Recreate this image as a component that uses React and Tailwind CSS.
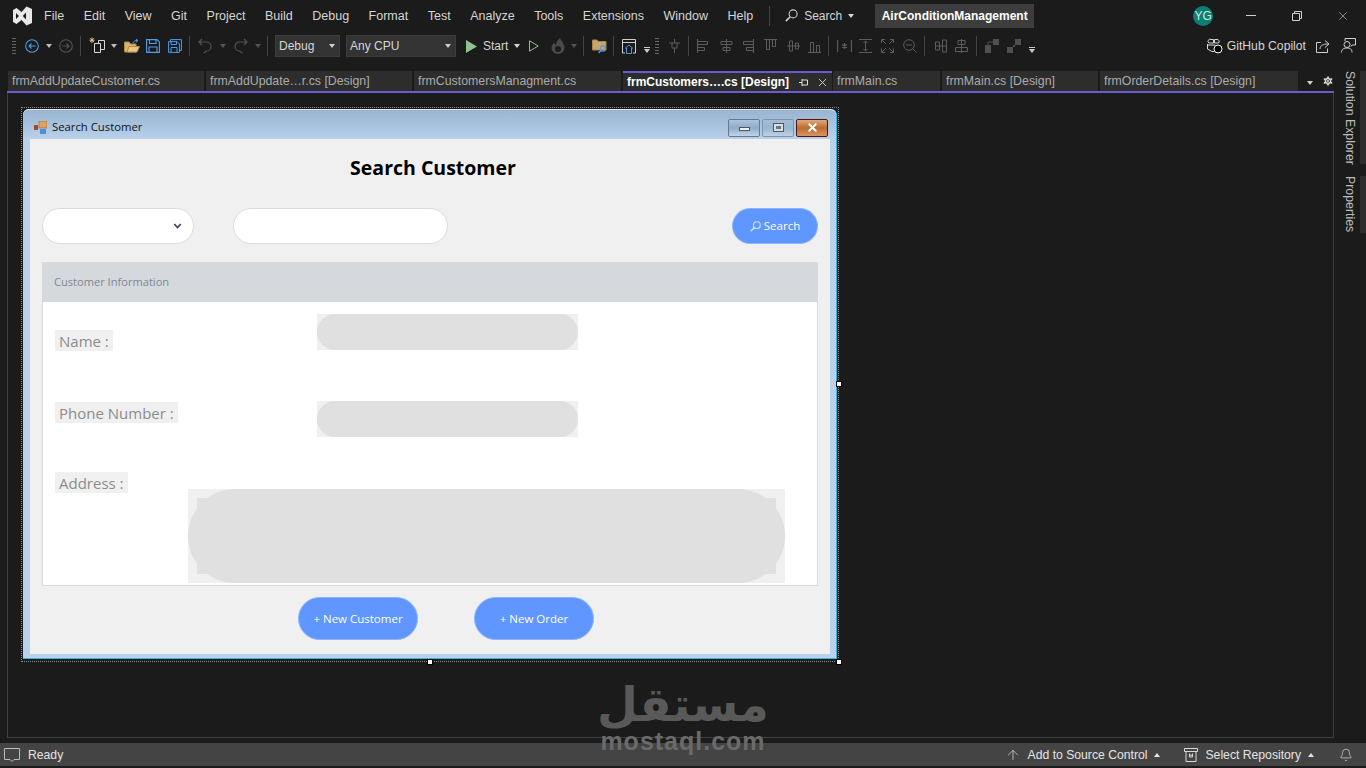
import { ArrowUp, Bell, Settings, X } from 'lucide-react';

const menuItems = ['File', 'Edit', 'View', 'Git', 'Project', 'Build', 'Debug', 'Format', 'Test', 'Analyze', 'Tools', 'Extensions', 'Window', 'Help'];

const tabs = [
  { name: 'frmAddUpdateCustomer.cs', width: 'w-[198px]' },
  { name: 'frmAddUpdate…r.cs [Design]', width: 'w-[208px]' },
  { name: 'frmCustomersManagment.cs', width: 'w-[209px]' },
  { name: 'frmCustomers….cs [Design]', width: 'w-[209px]', active: true },
  { name: 'frmMain.cs', width: 'w-[109px]' },
  { name: 'frmMain.cs [Design]', width: 'w-[158px]' },
  { name: 'frmOrderDetails.cs [Design]', width: 'w-[200px]' },
];

const Caret = ({ className = '', up = false }) => (
  <svg viewBox="0 0 6 4" className={`w-[6px] h-[4px] shrink-0 ${className}`} fill="currentColor">
    <path d={up ? 'M0 4 L3 0 L6 4 Z' : 'M0 0 L6 0 L3 4 Z'} />
  </svg>
);

// magnifier with the handle towards the bottom left
const Magnifier = ({ className = '', strokeWidth = 1.2 }) => (
  <svg viewBox="0 0 12 12" className={`shrink-0 ${className}`} fill="none" stroke="currentColor" strokeWidth={strokeWidth}>
    <circle cx="7.5" cy="4.5" r="3.7" />
    <path d="M4.8 7.2 L0.8 11.2" strokeWidth={strokeWidth + 0.5} />
  </svg>
);

const Gripper = ({ className = '' }) => (
  <div className={`w-[4px] h-[18px] shrink-0 bg-[radial-gradient(circle,#666_0.6px,transparent_0.7px)] bg-[length:2px_3px] ${className}`} />
);

const Sep = ({ className = '' }) => <div className={`w-px h-[20px] shrink-0 bg-[#444] ${className}`} />;

// dim layout toolbar glyphs, all share one stroke colour
const Tool = ({ className = '', w = 13, children }) => (
  <svg viewBox={`0 0 ${w} 14`} className={`h-[14px] shrink-0 text-[#5c5c5c] ${className}`} fill="none" stroke="currentColor" strokeWidth="1">
    {children}
  </svg>
);

const VsLogo = () => (
  <svg viewBox="0 0 20 20" className="w-[20px] h-[20px] shrink-0" fill="#e8e8e8">
    <path fillRule="evenodd" d="M14.5 0.5 L20 3 V17 L14.5 19.5 L9.5 14 L4.5 18 L1 16 V4 L4.5 2 L9.5 6 Z M4 7 V13 L7 10 Z M14 6.5 L10.8 10 L14 13.5 Z" />
  </svg>
);

const TitleBar = () => (
  <div className="h-[31px] shrink-0 flex items-center text-[12px] text-[#d6d6d6]">
    <div className="ml-[12px]"><VsLogo /></div>
    <div className="ml-[12px] mt-px flex items-center gap-[19.5px] text-[12.5px]">
      {menuItems.map((item) => (
        <span key={item}>{item}</span>
      ))}
    </div>
    <div className="ml-[16px] w-px h-[20px] bg-[#444]" />
    <Magnifier className="ml-[15px] w-[13px] h-[13px] text-[#cfcfcf]" strokeWidth={1} />
    <span className="ml-[6px]">Search</span>
    <Caret className="ml-[6px]" />
    <div className="ml-[21px] w-[159px] h-[24px] bg-[#3d3d3d] flex items-center justify-center font-bold text-white">
      AirConditionManagement
    </div>
    <div className="ml-[159px] w-[20px] h-[20px] rounded-full bg-[#0d7f72] flex items-center justify-center text-[12px] text-[#cfe9e5]">
      YG
    </div>
    <div className="ml-[33px] w-[10px] h-px bg-[#d0d0d0]" />
    <svg viewBox="0 0 10 10" className="ml-[36px] w-[10px] h-[10px]" fill="none" stroke="#d0d0d0">
      <path d="M0.5 2.5 H7.5 V9.5 H0.5 Z M2.5 2.5 V0.5 H9.5 V7.5 H7.5" />
    </svg>
    <X className="ml-[34px] w-[14px] h-[14px] text-[#d0d0d0]" strokeWidth={1} />
  </div>
);

const Toolbar = () => (
  <div className="h-[30px] shrink-0 flex items-center text-[12px] text-[#d6d6d6]">
    <Gripper className="ml-[12px]" />
    <svg viewBox="0 0 14 14" className="ml-[9px] w-[14px] h-[14px] shrink-0" fill="none" stroke="#4f9be8" strokeWidth="1.1">
      <circle cx="7" cy="7" r="6.3" />
      <path d="M10.5 7 H4 M6.5 4.5 L4 7 L6.5 9.5" />
    </svg>
    <Caret className="ml-[7px] text-[#bdbdbd]" />
    <svg viewBox="0 0 14 14" className="ml-[7px] w-[14px] h-[14px] shrink-0" fill="none" stroke="#555" strokeWidth="1.1">
      <circle cx="7" cy="7" r="6.3" />
      <path d="M3.5 7 H10 M7.5 4.5 L10 7 L7.5 9.5" />
    </svg>
    <Sep className="ml-[7px]" />
    <svg viewBox="0 0 16 18" className="ml-[8px] w-[16px] h-[18px] shrink-0" fill="none" stroke="#d8d8d8">
      <path d="M5.5 6.5 H11.5 V15.5 H5.5 Z M9.5 6.5 V3.5 H15.5 V12.5 H11.5" />
      <path d="M3 0.5 V6 M0.5 3.2 H5.5 M1.2 1.3 L4.8 5 M4.8 1.3 L1.2 5" stroke="#e3c57f" />
    </svg>
    <Caret className="ml-[6px] text-[#bdbdbd]" />
    <svg viewBox="0 0 16 14" className="ml-[7px] w-[16px] h-[14px] shrink-0">
      <path d="M0.5 3 H5 L6.5 5 H12 V13 H0.5 Z" fill="#d9b36c" stroke="#b08a45" />
      <path d="M3 13 L5 7.5 H15.5 L13 13 Z" fill="#e8c98a" stroke="#b08a45" />
      <path d="M9 4 C9.5 2 11.5 1.5 13.5 1.5 M12 0 L14 1.5 L12 3.2" fill="none" stroke="#4f9be8" />
    </svg>
    <svg viewBox="0 0 14 14" className="ml-[6px] w-[14px] h-[14px] shrink-0" fill="none" stroke="#4f9be8" strokeWidth="1.1">
      <path d="M0.6 0.6 H11 L13.4 3 V13.4 H0.6 Z M3.5 0.6 V4.5 H10 V0.6 M3 13.4 V8 H11 V13.4" />
    </svg>
    <svg viewBox="0 0 14 14" className="ml-[8px] w-[14px] h-[14px] shrink-0" fill="none" stroke="#4f9be8" strokeWidth="1">
      <path d="M2.5 2.5 V0.6 H13.4 V11.5 H11.5 M0.6 2.6 H9 L11.4 5 V13.4 H0.6 Z M3 13.4 V8.5 H9 V13.4 M3 2.6 V5.5 H8.5 V2.6" />
    </svg>
    <Sep className="ml-[7px]" />
    <svg viewBox="0 0 14 16" className="ml-[8px] w-[14px] h-[16px] shrink-0" fill="none" stroke="#555" strokeWidth="1.2">
      <path d="M4 1 L1 4 L4 7 M1 4 H8.5 A4.5 4.5 0 0 1 8.5 13 L5.5 15" />
    </svg>
    <Caret className="ml-[8px] text-[#555]" />
    <svg viewBox="0 0 14 16" className="ml-[8px] w-[14px] h-[16px] shrink-0" fill="none" stroke="#555" strokeWidth="1.2">
      <path d="M10 1 L13 4 L10 7 M13 4 H5.5 A4.5 4.5 0 0 0 5.5 13 L8.5 15" />
    </svg>
    <Caret className="ml-[7px] text-[#555]" />
    <Sep className="ml-[6px]" />
    <div className="ml-[7px] w-[65px] h-[22px] shrink-0 bg-[#333] border border-[#3c3c3c] flex items-center justify-between pl-[3px] pr-[4px]">
      <span>Debug</span>
      <Caret className="text-[#d0d0d0]" />
    </div>
    <div className="ml-[6px] w-[110px] h-[22px] shrink-0 bg-[#333] border border-[#3c3c3c] flex items-center justify-between pl-[3px] pr-[4px]">
      <span>Any CPU</span>
      <Caret className="text-[#d0d0d0]" />
    </div>
    <svg viewBox="0 0 11 13" className="ml-[10px] w-[11px] h-[13px] shrink-0" fill="#8cc48c">
      <path d="M0 0 L11 6.5 L0 13 Z" />
    </svg>
    <span className="ml-[6px] w-[30px] shrink-0">Start</span>
    <Caret className="ml-px" />
    <svg viewBox="0 0 10 12" className="ml-[9px] w-[10px] h-[12px] shrink-0" fill="none" stroke="#8cc48c">
      <path d="M0.5 0.8 L9.2 6 L0.5 11.2 Z" />
    </svg>
    <svg viewBox="0 0 14 16" className="ml-[12px] w-[14px] h-[16px] shrink-0" fill="#4a4a4a">
      <path fillRule="evenodd" d="M9 0 C10 3 13.5 5 13.5 10 A6.5 6 0 0 1 0.5 10 C0.5 7.5 2 6 3 4.5 C3.5 6 4 6.5 5 7 C5 4 6.5 2 9 0 Z M7 8 A3 3 0 1 0 7 14 A3 3 0 1 0 7 8 Z" />
    </svg>
    <Caret className="ml-[6px] text-[#555]" />
    <Sep className="ml-[6px]" />
    <svg viewBox="0 0 16 16" className="ml-[8px] w-[16px] h-[16px] shrink-0">
      <path d="M0.5 2 H5 L6 3.5 H14 V12 H0.5 Z" fill="#c9a667" stroke="#a5854c" />
      <circle cx="11" cy="10.5" r="2.6" fill="none" stroke="#4f9be8" strokeWidth="1.2" />
      <path d="M9 12.5 L6.5 15" stroke="#4f9be8" strokeWidth="1.4" />
    </svg>
    <Sep className="ml-[5px]" />
    <svg viewBox="0 0 14 15" className="ml-[8px] w-[14px] h-[15px] shrink-0" fill="none">
      <path d="M3 14 H0.5 V0.5 H13.5 V14 H11 M0.5 3.5 H13.5" stroke="#cfcfcf" />
      <path d="M3 9.5 L7 6 L11 9.5 M4.5 9 V14.5 H9.5 V9" stroke="#4f9be8" />
    </svg>
    <div className="ml-[8px] w-[6px] flex flex-col gap-px mt-[8px] shrink-0">
      <div className="h-px bg-[#ccc]" />
      <Caret className="text-[#ccc]" />
    </div>
    <Gripper className="ml-[5px]" />
    <Tool className="ml-[9px] w-[13px]"><path d="M6.5 0 V4 M6.5 9 V14 M1 4 H12 M4 4 V9 H9 V4" /></Tool>
    <Sep className="ml-[7px]" />
    <Tool className="ml-[8px] w-[13px]"><path d="M0.5 0 V14 M0.5 2.5 H10.5 V5.5 H0.5 M0.5 8.5 H7.5 V11.5 H0.5" /></Tool>
    <Tool className="ml-[10px] w-[13px]"><path d="M6.5 0 V14 M1 2.5 H12 V5.5 H1 Z M3 8.5 H10 V11.5 H3 Z" /></Tool>
    <Tool className="ml-[8px] w-[13px]"><path d="M12.5 0 V14 M12.5 2.5 H2.5 V5.5 H12.5 M12.5 8.5 H5.5 V11.5 H12.5" /></Tool>
    <Tool className="ml-[10px] w-[13px]"><path d="M0 0.5 H13 M2.5 0.5 V10.5 H5.5 V0.5 M8.5 0.5 V7.5 H11.5 V0.5" /></Tool>
    <Tool className="ml-[10px] w-[13px]"><path d="M0 7 H13 M2.5 2 H5.5 V12 H2.5 Z M8.5 4 H11.5 V10 H8.5 Z" /></Tool>
    <Tool className="ml-[8px] w-[13px]"><path d="M0 13.5 H13 M2.5 13.5 V3.5 H5.5 V13.5 M8.5 13.5 V6.5 H11.5 V13.5" /></Tool>
    <Sep className="ml-[7px]" />
    <Tool className="ml-[8px] w-[15px]" w={15}><path d="M0.5 1 V13 M14.5 1 V13 M7.5 4 V10 M5 5.5 L10 8.5 M10 5.5 L5 8.5" strokeWidth="1.3" /></Tool>
    <Tool className="ml-[7px] w-[13px]"><path d="M0 0.5 H13 M0 13.5 H13 M6.5 2 V12 M4.5 4 L6.5 2 L8.5 4 M4.5 10 L6.5 12 L8.5 10" /></Tool>
    <Tool className="ml-[9px] w-[13px]"><path d="M0.5 4 V0.5 H4 M9 0.5 H12.5 V4 M12.5 9.5 V13.5 H9 M4 13.5 H0.5 V9.5 M1 1 L5 5 M12 1 L8 5 M1 13 L5 9 M12 13 L8 9" /></Tool>
    <Tool className="ml-[9px] w-[14px]" w={14}><circle cx="6" cy="6" r="5.3" /><path d="M10 10 L13.5 13.5 M3 6 H9" /></Tool>
    <Sep className="ml-[7px]" />
    <Tool className="ml-[10px] w-[12px]" w={12}><path d="M0 7 H12 M0.5 3 H4.5 V11 H0.5 Z M7.5 1 H11.5 V13 H7.5 Z" /></Tool>
    <Tool className="ml-[8px] w-[13px]"><path d="M6.5 0 V14 M3 1.5 H10 V5.5 H3 Z M0.5 8.5 H12.5 V12.5 H0.5 Z" /></Tool>
    <Sep className="ml-[8px]" />
    <svg viewBox="0 0 14 14" className="ml-[8px] w-[14px] h-[14px] shrink-0" fill="#505050">
      <path d="M0 6 H6 V14 H0 Z M8 0 H14 V6 H8 Z" />
      <path d="M6 3 H9 M3 6 V3 H6" stroke="#505050" fill="none" />
    </svg>
    <svg viewBox="0 0 14 14" className="ml-[8px] w-[14px] h-[14px] shrink-0" fill="#505050">
      <path d="M0 8 H6 V14 H0 Z M8 0 H14 V6 H8 Z M6 6 H8 V8 H6 Z" />
    </svg>
    <div className="ml-[8px] w-[6px] flex flex-col gap-px mt-[8px] shrink-0">
      <div className="h-px bg-[#ccc]" />
      <Caret className="text-[#ccc]" />
    </div>
    <div className="ml-auto pr-[10px] flex items-center">
      <svg viewBox="0 0 17 16" className="w-[17px] h-[16px]" fill="none" stroke="#d8d8d8">
        <path d="M5 1.5 H7.5 V5 H3 A2 2 0 0 1 5 1.5 Z M8.5 1.5 H11 A2 2 0 0 1 12.5 5 H8.5 Z M2 7 H9 M1.5 6 V11 L6 13.5 H8" />
        <circle cx="12" cy="11" r="4" fill="#000" stroke="#fff" />
      </svg>
      <span className="ml-[4px] text-[12.2px]">GitHub Copilot</span>
      <svg viewBox="0 0 14 14" className="ml-[10px] w-[14px] h-[14px]" fill="none" stroke="#cfcfcf">
        <path d="M5 3.5 H0.5 V13.5 H11.5 V9.5" />
        <path d="M4 10 C4 6.5 7 5 12 5 M9 1.5 L13 5 L9 8.5" />
      </svg>
      <svg viewBox="0 0 15 15" className="ml-[11px] w-[15px] h-[15px]" fill="none" stroke="#cfcfcf">
        <path d="M4 3 V0.5 H14.5 V7 H11 L10 8.5" />
        <circle cx="6" cy="6.5" r="3" />
        <path d="M0.5 14.5 C0.5 11 3 10 6 10 C9 10 11 11 11 14.5" />
      </svg>
    </div>
  </div>
);

const TabStrip = () => (
  <div className="h-[22px] shrink-0 flex items-start pl-px text-[12.33px]">
    {tabs.map((tab) => (
      <div
        key={tab.name}
        className={
          tab.active
            ? `${tab.width} h-[20px] shrink-0 mr-px bg-[#2c2c2c] border-t-2 border-[#6a5bd2] flex items-center pl-[4px] font-bold text-[12px] text-white`
            : `${tab.width} h-[20px] shrink-0 pr-[2px]`
        }
      >
        {tab.active ? (
          <>
            <span className="whitespace-nowrap">{tab.name}</span>
            <svg viewBox="0 0 9 9" className="ml-[10px] w-[9px] h-[9px] shrink-0" fill="none" stroke="#e0e0e0">
              <path d="M0 4.5 H3 M3 1 V8 M3 2 H8.5 V7 H3" />
            </svg>
            <X className="ml-[8px] w-[13px] h-[13px] shrink-0 text-[#e0e0e0]" strokeWidth={1.6} />
          </>
        ) : (
          <div className="h-full bg-[#2d2d2d] pl-[4px] flex items-center text-[#ababab] whitespace-nowrap overflow-hidden">
            {tab.name}
          </div>
        )}
      </div>
    ))}
    <Caret className="ml-[7px] mt-[10px] text-[#d0d0d0]" />
    <Settings className="ml-[9px] mt-[4px] w-[12px] h-[12px] text-[#2c2c2c] fill-[#d8d8d8]" strokeWidth={1.5} />
  </div>
);

const WinButton = ({ className = '', children }) => (
  <div className={`w-[32px] h-[18px] rounded-[2px] border flex items-center justify-center ${className}`}>{children}</div>
);

const FieldLabel = ({ children }) => (
  <div className="w-fit px-[4px] h-[21px] bg-[#f0f0f0] text-[15px] leading-[23px] text-[#8c8c8c] whitespace-nowrap">{children}</div>
);

const FieldBox = () => (
  <div className="w-[261px] h-[36px] bg-[#f0f0f0]">
    <div className="h-full rounded-full bg-[#e0e0e0]" />
  </div>
);

const PillButton = ({ children, className = '' }) => (
  <div className={`rounded-full bg-[#5f96ff] border border-[#8eb4ff] flex items-center justify-center text-[11.5px] text-white ${className}`}>
    {children}
  </div>
);

const SearchForm = () => (
  <div className="w-[814px] h-[550px] rounded-t-[6px] bg-[#b9d1ea] border-r border-b border-[#2fb8e6] flex flex-col font-['Open_Sans',sans-serif]">
    <div className="h-[30px] shrink-0 rounded-t-[6px] border-t border-[#dfe9f3] bg-gradient-to-b from-[#99b4d1] to-[#b9d1ea] flex items-center pt-[6px] pl-[11px] pr-[8px]">
      <svg viewBox="0 0 13 13" className="w-[13px] h-[13px] shrink-0">
        <rect x="5" y="0" width="8" height="7" fill="#e0a060" stroke="#a86a30" strokeWidth="0.7" />
        <rect x="0" y="4" width="4" height="5" fill="#a8481e" />
        <rect x="6" y="8" width="6" height="5" fill="#4a90e0" />
      </svg>
      <span className="ml-[5px] text-[11.3px] text-[#111]">Search Customer</span>
      <div className="ml-auto flex gap-[2px]">
        <WinButton className="border-[#6b7785] bg-gradient-to-b from-[#a9c4df] via-[#8eabc8] to-[#c2d6ea]">
          <div className="w-[11px] h-[4px] bg-[#eee] border border-[#555] mt-[3px]" />
        </WinButton>
        <WinButton className="border-[#7f95aa] bg-gradient-to-b from-[#a3bdd8] via-[#9ab5d1] to-[#bcd2e8]">
          <div className="w-[11px] h-[9px] bg-[#ddd] border border-[#555] flex items-center justify-center">
            <div className="w-[5px] h-[3px] bg-[#5b7a9a]" />
          </div>
        </WinButton>
        <WinButton className="border-[#4a1a1a] bg-gradient-to-b from-[#e3a878] via-[#b96c33] to-[#d99662]">
          <X className="w-[13px] h-[13px] text-white" strokeWidth={3.5} />
        </WinButton>
      </div>
    </div>
    <div className="ml-[7px] w-[800px] h-[515px] bg-[#f0f0f0] px-[12px] flex flex-col">
      <h1 className="mt-[15px] h-[28px] text-[19.5px] leading-[28px] font-bold text-black text-center pl-[6px]">Search Customer</h1>
      <div className="mt-[26px] h-[36px] flex items-stretch">
        <div className="w-[152px] rounded-full bg-white border border-[#dcdcdc] flex items-center justify-end pr-[11px]">
          <svg viewBox="0 0 8 6" className="w-[9px] h-[6px]" fill="none" stroke="#3d4a5f" strokeWidth="1.8">
            <path d="M0.8 1 L4 4.5 L7.2 1" />
          </svg>
        </div>
        <div className="ml-[39px] w-[215px] rounded-full bg-white border border-[#dcdcdc]" />
        <PillButton className="ml-auto w-[86px] gap-[3px]">
          <Magnifier className="w-[11px] h-[11px] text-[#cfe0ff]" />
          <span>Search</span>
        </PillButton>
      </div>
      <div className="mt-[18px] h-[324px] border border-[#d9d9d9] bg-white flex flex-col">
        <div className="h-[39px] shrink-0 bg-[#d5d9dd] flex items-center pl-[11px] text-[11.1px] text-[#7c8791]">
          Customer Information
        </div>
        <div className="flex-1 flex flex-col pl-[12px]">
          <div className="mt-[12px] h-[36px] flex items-start">
            <div className="w-[262px] mt-[16px]"><FieldLabel>Name :</FieldLabel></div>
            <FieldBox />
          </div>
          <div className="mt-[51px] h-[36px] flex items-start">
            <div className="w-[262px] mt-px"><FieldLabel>Phone Number :</FieldLabel></div>
            <FieldBox />
          </div>
          <div className="mt-[35px] w-[73px]"><FieldLabel>Address :</FieldLabel></div>
          <div className="ml-[133px] -mt-[4px] w-[597px] h-[94px] bg-[#f0f0f0]">
            <div className="h-full rounded-[47px] bg-[#e0e0e0] p-[9px]">
              <div className="h-full bg-[#e0e0e0]" />
            </div>
          </div>
        </div>
      </div>
      <div className="mt-[11px] ml-[256px] flex gap-[56px]">
        <PillButton className="w-[120px] h-[43px]">+ New Customer</PillButton>
        <PillButton className="w-[120px] h-[43px]">+ New Order</PillButton>
      </div>
    </div>
  </div>
);

const Handle = ({ className = '' }) => (
  <div className={`absolute w-[6px] h-[6px] bg-white border border-black ${className}`} />
);

const App = () => (
  <div className="relative w-[1366px] h-[768px] overflow-hidden bg-[#1b1b1b] flex flex-col font-['Liberation_Sans',sans-serif]">
    <TitleBar />
    <Toolbar />
    <div className="mt-[10px] h-[672px] flex">
      <div className="ml-[7px] w-[1327px] flex flex-col pb-[5px]">
        <TabStrip />
        <div className="relative -mt-[2px] h-[2px] bg-[#6a5bd2] shrink-0" />
        <div className="flex-1 border-l border-r border-b border-[#3f3f3f] pl-[13px] pt-[14px]">
          <div className="relative w-[818px] h-[555px] border border-dotted border-[#8a8a8a] p-px">
            <SearchForm />
            <Handle className="right-[-4px] top-[273px]" />
            <Handle className="left-[405px] bottom-[-4px]" />
            <Handle className="right-[-4px] bottom-[-4px]" />
          </div>
        </div>
      </div>
      <div className="relative flex-1 flex flex-col items-start pl-[7px] text-[12.33px] text-[#bdbdbd]">
        <div className="h-[93px] [writing-mode:vertical-rl] whitespace-nowrap">Solution Explorer</div>
        <div className="mt-[12px] h-[57px] [writing-mode:vertical-rl] whitespace-nowrap">Properties</div>
        <div className="absolute right-0 top-0 w-[6px] h-[93px] bg-[#2d2d2d]" />
        <div className="absolute right-0 top-[105px] w-[6px] h-[57px] bg-[#2d2d2d]" />
      </div>
    </div>
    <div className="h-[23px] shrink-0 bg-[#444] flex items-center pt-px text-[12.2px] text-[#e4e4e4]">
      <svg viewBox="0 0 16 15" className="ml-[4px] w-[16px] h-[15px] shrink-0" fill="none" stroke="#bbb">
        <path d="M0.5 0.5 H15.5 V11.5 H10 L8 13.5 L6 11.5 H0.5 Z" />
      </svg>
      <span className="ml-[8px]">Ready</span>
      <div className="ml-auto pr-[13px] flex items-center">
        <ArrowUp className="w-[16px] h-[16px] text-[#d8d8d8]" strokeWidth={1.1} />
        <span className="ml-[7px]">Add to Source Control</span>
        <Caret up className="ml-[7px] text-[#e4e4e4]" />
        <svg viewBox="0 0 14 14" className="ml-[24px] w-[14px] h-[14px]" fill="none" stroke="#d8d8d8">
          <path d="M0.5 0.5 H13.5 V3.5 H0.5 Z M2 3.5 V13.5 H12 V3.5 M5.5 5.5 V9 H8.5 V5.5 M5.5 7.2 H8.5" />
        </svg>
        <span className="ml-[7px]">Select Repository</span>
        <Caret up className="ml-[7px] text-[#e4e4e4]" />
        <Bell className="ml-[25px] w-[14px] h-[14px] text-[#d8d8d8]" strokeWidth={1.2} />
      </div>
    </div>
    {/* mostaql watermark sits over the status bar */}
    <div className="absolute left-[600px] top-[680px] w-[166px] flex flex-col items-center pointer-events-none">
      <div dir="rtl" className="h-[50px] font-['DejaVu_Sans',sans-serif] font-bold text-[47px] leading-[50px] text-[#595959]">مستقل</div>
      <div className="h-[22px] text-[25px] leading-[22px] font-bold tracking-[1px] text-[#6a6a6a]">mostaql.com</div>
    </div>
  </div>
);

export default App;
